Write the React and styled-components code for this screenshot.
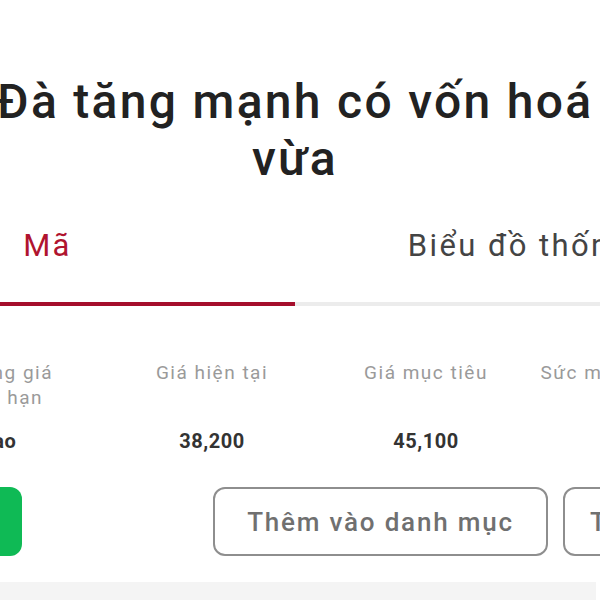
import React from 'react'
import styled, { createGlobalStyle } from 'styled-components'

const GlobalStyle = createGlobalStyle`
  html, body {
    margin: 0;
    padding: 0;
    background: #ffffff;
    overflow: hidden;
  }
  body {
    font-family: Roboto, "Noto Sans", "Liberation Sans", sans-serif;
    color: #222;
  }
`

// labels break where the app breaks them
const stats = [
  { label: 'Khoảng giá\nngắn hạn', value: 'Cao' },
  { label: 'Giá hiện tại', value: '38,200' },
  { label: 'Giá mục tiêu', value: '45,100' },
  { label: 'Sức mạnh tương đối', value: '72' },
]

const App = () => {
  return (
    <>
      <GlobalStyle />
      <Screen>
        <Title>Đà tăng mạnh có vốn hoá vừa</Title>
        <Tabs>
          <Tab active>Mã</Tab>
          <Tab>Biểu đồ thống kê</Tab>
        </Tabs>
        <StatsRow>
          {stats.map((s) => (
            <Stat key={s.label}>
              <StatLabel>{s.label}</StatLabel>
              <StatValue>{s.value}</StatValue>
            </Stat>
          ))}
        </StatsRow>
        <ButtonRow>
          <BuyButton>Mua</BuyButton>
          <OutlineGroup>
            <OutlineButton>Thêm vào danh mục</OutlineButton>
            <OutlineButton>Theo dõi</OutlineButton>
          </OutlineGroup>
        </ButtonRow>
        <Card />
      </Screen>
    </>
  )
}

const Screen = styled.div`
  width: 990px;
  margin-left: -200px;
`

const Title = styled.h1`
  margin: 0;
  padding: 73px 180px 0;
  font-size: 48px;
  font-weight: 500;
  letter-spacing: 2.3px;
  line-height: 57px;
  text-align: center;
  color: #222;
`

const Tabs = styled.div`
  display: flex;
  padding-top: 41px;
`

const Tab = styled.div`
  flex: 1;
  text-align: center;
  font-size: 31px;
  letter-spacing: 2.4px;
  line-height: 36px;
  padding-bottom: 38px;
  color: ${(p) => (p.active ? '#b0142f' : '#444')};
  border-bottom: 4px solid ${(p) => (p.active ? '#a50e2c' : '#ececec')};
`

const StatsRow = styled.div`
  display: flex;
  padding: 54px 0 0 91px;
`

const Stat = styled.div`
  width: 214px;
  flex-shrink: 0;
  display: flex;
  flex-direction: column;
  align-items: center;
  text-align: center;
`

const StatLabel = styled.div`
  min-height: 50px;
  font-size: 19px;
  letter-spacing: 1.5px;
  line-height: 25px;
  white-space: pre-line;
  color: #9a9a9a;
`

const StatValue = styled.div`
  margin-top: 19px;
  font-size: 20px;
  font-weight: 700;
  letter-spacing: 0.5px;
  line-height: 24px;
  color: #333;
`

const ButtonRow = styled.div`
  display: flex;
  gap: 191px;
  margin-top: 34px;
  padding-left: 24px;
`

const BuyButton = styled.button`
  flex-shrink: 0;
  width: 198px;
  height: 69px;
  border: none;
  border-radius: 12px;
  background: #0fba55;
  color: #fff;
  font-family: inherit;
  font-size: 26px;
  font-weight: 500;
`

const OutlineGroup = styled.div`
  display: flex;
  flex-shrink: 0;
  gap: 15px;
`

const OutlineButton = styled.button`
  flex-shrink: 0;
  min-width: 335px;
  height: 69px;
  padding: 0 25px;
  box-sizing: border-box;
  border: 2px solid #8e8e8e;
  border-radius: 12px;
  background: #fff;
  color: #707070;
  font-family: inherit;
  font-size: 26px;
  font-weight: 500;
  letter-spacing: 1.8px;
  &:last-child {
    min-width: 0;
  }
`

const Card = styled.div`
  width: 780px;
  height: 120px;
  margin: 26px 0 0 16px;
  background: #f4f4f4;
`

export default App
